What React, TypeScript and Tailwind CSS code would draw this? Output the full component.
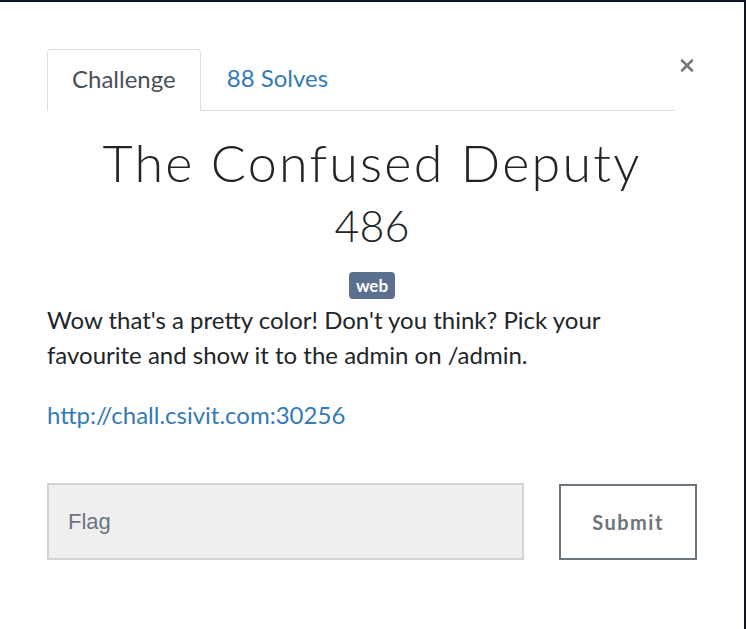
import { X } from "lucide-react";

const App = () => {
  return (
    <div className="h-[629px] w-full bg-[#0b1526] pt-[2px] pr-[2px] font-['Lato',sans-serif]">
      <div className="h-full bg-white px-[47px] pt-[47px]">
        {/* Header with tabs */}
        <div className="flex items-start">
          <nav className="flex flex-1 border-b border-[#dddddd]">
            <div className="-mb-px flex h-[62px] items-center rounded-t-[4px] border border-b-0 border-[#dddddd] bg-white px-[24px] pb-[3px] text-[24px] text-[#495057]">
              Challenge
            </div>
            <div className="flex h-[61px] items-center px-[26px] pb-[3px] text-[24px] text-[#337ab7]">
              88 Solves
            </div>
          </nav>
          <button className="ml-[2px] mt-[6px] flex w-[20px] justify-center text-[#777777]">
            <X size={21} strokeWidth={3} />
          </button>
        </div>

        {/* Title */}
        <div className="text-center">
          <h2 className="mt-[23px] text-[52px] font-light leading-[56px] tracking-[2.2px] text-[#212529]">
            The Confused Deputy
          </h2>
          <h3 className="mt-[12px] text-[43px] font-light leading-[48px] text-[#212529]">486</h3>
          <div className="mt-[22px] flex justify-center">
            <span className="rounded-[4px] bg-[#5b6f8e] px-[7px] text-[17px] font-bold leading-[27px] text-white">
              web
            </span>
          </div>
        </div>

        {/* Description */}
        <p className="mt-[3px] max-w-[620px] text-[24px] leading-[35px] text-[#212529]">
          Wow that's a pretty color! Don't you think? Pick your favourite and show it to the admin on /admin.
        </p>
        <p className="mt-[25px] text-[24px] leading-[35px] text-[#337ab7]">
          <a href="#">http://chall.csivit.com:30256</a>
        </p>

        {/* Flag form */}
        <div className="mt-[51px] flex items-center justify-between">
          <input
            placeholder="Flag"
            className="h-[77px] w-[477px] border-2 border-[#d0d4d8] bg-[#efefef] px-[19px] font-['Liberation_Sans',sans-serif] text-[22px] text-[#495057] placeholder:text-[#6c757d] outline-none"
          />
          <button className="h-[76px] w-[138px] border-2 border-[#6c757d] bg-white text-[20px] font-bold tracking-[1.5px] text-[#6c757d]">
            Submit
          </button>
        </div>
      </div>
    </div>
  );
};

export default App;
